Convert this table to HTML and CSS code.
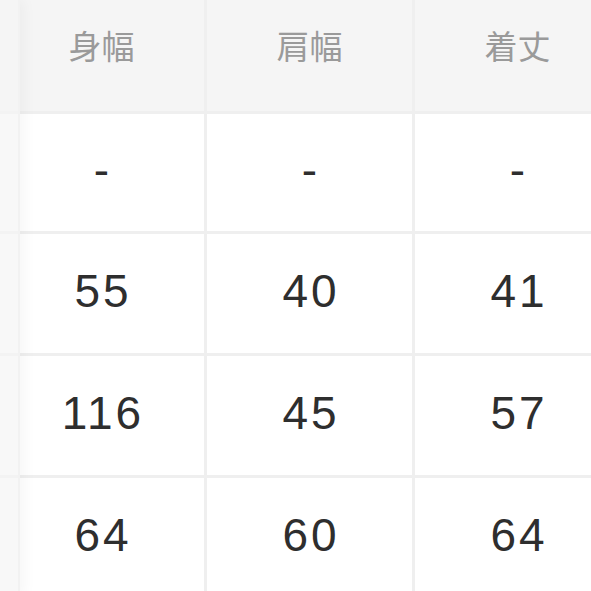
FILE: index.html
```html
<!DOCTYPE html>
<html lang="ja">
<head>
<meta charset="utf-8">
<link rel="stylesheet" href="styles.css">
</head>
<body>
<div class="viewport">
  <div class="grid">
    <div class="cell head">身幅</div>
    <div class="cell head">肩幅</div>
    <div class="cell head">着丈</div>
    <div class="cell">-</div>
    <div class="cell">-</div>
    <div class="cell">-</div>
    <div class="cell">55</div>
    <div class="cell">40</div>
    <div class="cell">41</div>
    <div class="cell">116</div>
    <div class="cell">45</div>
    <div class="cell">57</div>
    <div class="cell">64</div>
    <div class="cell">60</div>
    <div class="cell">64</div>
  </div>
  <div class="sticky">
    <div class="scell shead"></div>
    <div class="scell"></div>
    <div class="scell"></div>
    <div class="scell"></div>
    <div class="scell"></div>
  </div>
</div>
</body>
</html>
```
FILE: styles.css
```css
html, body {
  margin: 0;
  padding: 0;
  background: #ffffff;
}
.viewport {
  position: relative;
  width: 591px;
  height: 591px;
  overflow: hidden;
  background: #ffffff;
}
.grid {
  display: grid;
  grid-template-columns: repeat(3, 205px);
  grid-template-rows: 111px 117px 119px 119px 119px;
  gap: 3px;
  margin-left: -1px;
  width: 621px;
  background: #efefef;
}
.cell {
  background: #ffffff;
  display: flex;
  align-items: center;
  justify-content: center;
  padding: 0 0 6px 3px;
  box-sizing: border-box;
  font-family: "Liberation Sans", Arial, sans-serif;
  font-size: 46px;
  line-height: 1;
  letter-spacing: 3px;
  color: #2e2e2e;
}
.cell.head {
  background: #f5f5f5;
  align-items: flex-start;
  padding: 26px 0 0 0;
  font-family: "Noto Sans CJK JP", "Noto Sans", sans-serif;
  font-size: 33px;
  line-height: 1.2;
  letter-spacing: 0;
  color: #9a9a9a;
}
.sticky {
  position: absolute;
  left: 0;
  top: 0;
  width: 18px;
  display: grid;
  grid-template-rows: 111px 117px 119px 119px 119px;
  gap: 3px;
  background: #f3f3f3;
  box-shadow: 4px 0 14px rgba(0, 0, 0, 0.04);
  border-right: 2px solid #f2f2f2;
}
.scell {
  background: #f8f8f8;
}
.scell.shead {
  background: #f5f5f5;
}
```
